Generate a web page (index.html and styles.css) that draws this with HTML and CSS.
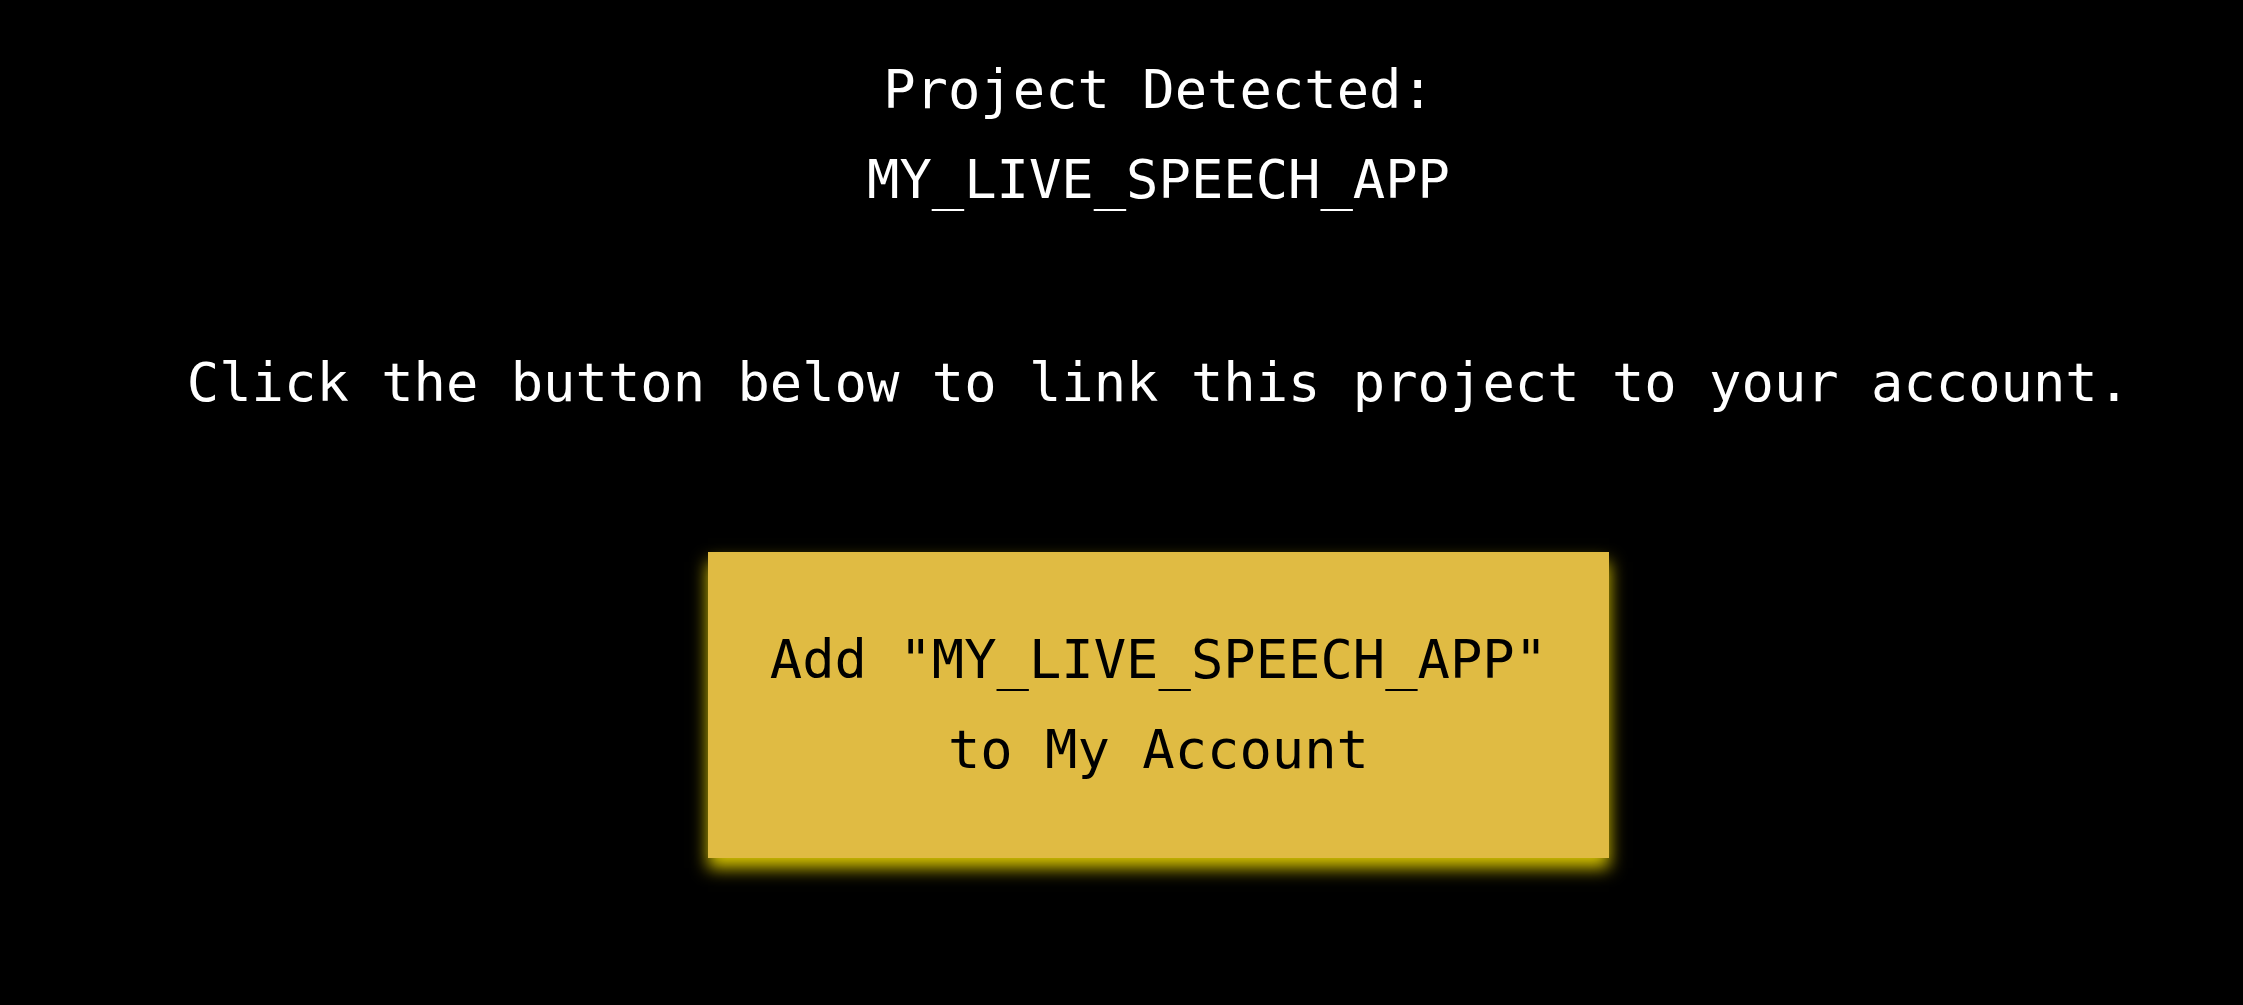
FILE: index.html
```html
<!DOCTYPE html>
<html lang="en">
<head>
<meta charset="utf-8">
<title>Project Detected</title>
<link rel="stylesheet" href="styles.css">
</head>
<body>
<main class="page">
  <h1 class="title">Project Detected:<br>MY_LIVE_SPEECH_APP</h1>
  <p class="lead">Click the button below to link this project to your account.</p>
  <button class="add-btn" type="button">Add "MY_LIVE_SPEECH_APP"<br>to My Account</button>
</main>
</body>
</html>
```

FILE: styles.css
```css
html, body {
  margin: 0;
  padding: 0;
  background: #000;
}

.page {
  display: flex;
  flex-direction: column;
  align-items: center;
  padding-left: 74px;
  padding-top: 45px;
  min-height: 900px;
  color: #fff;
  font-family: "DejaVu Sans Mono", "Liberation Mono", monospace;
  font-size: 53.8px;
  line-height: 90px;
  text-align: center;
}

.title {
  margin: 0;
  font-size: 53.8px;
  font-weight: normal;
  line-height: 90px;
}

.lead {
  margin: 113px 0 0;
}

.add-btn {
  margin-top: 124px;
  padding: 63px 62px;
  border: none;
  border-radius: 0;
  background: #e0bb43;
  color: #000;
  font-family: inherit;
  font-size: 53.8px;
  line-height: 90px;
  text-align: center;
  box-shadow: 0 10px 16px rgba(225, 205, 0, 0.95);
  cursor: pointer;
}
```
